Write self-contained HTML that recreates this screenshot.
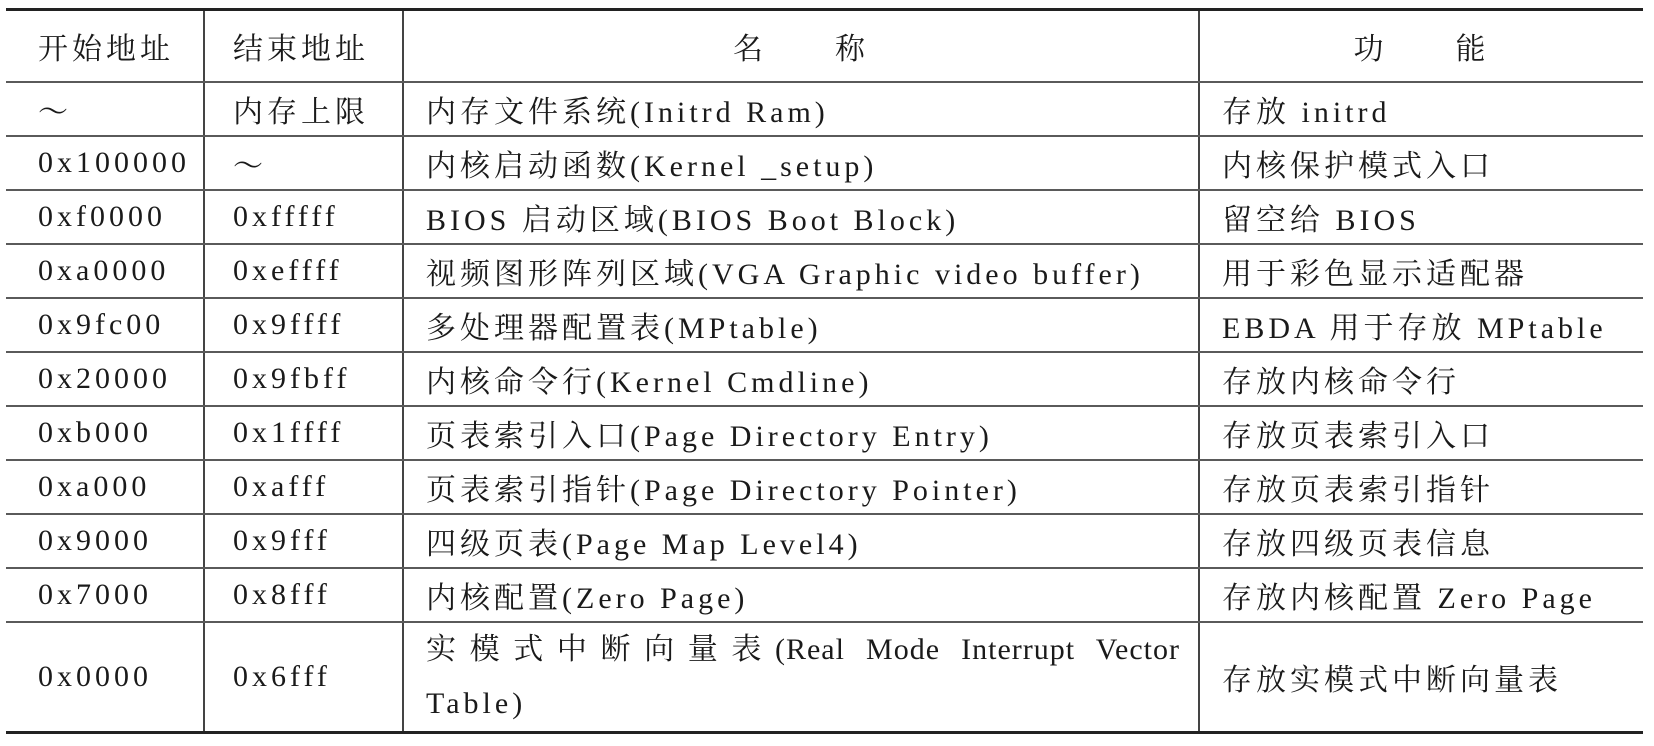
<!DOCTYPE html>
<html><head><meta charset="utf-8"><style>
html,body{margin:0;padding:0;background:#fff;width:1654px;height:746px;overflow:hidden}
table{position:absolute;left:6px;top:8px;width:1637px;border-collapse:collapse;table-layout:fixed;
font-family:"Liberation Serif","Noto Serif CJK SC",serif;font-size:30px;letter-spacing:4px;color:#1a1a1a}
td{border-bottom:2px solid #5a5a5a;border-left:2px solid #444;height:52px;padding:0;vertical-align:middle;white-space:nowrap}
td:first-child{border-left:none;padding-left:32px}
td:nth-child(2){padding-left:28px}
td:nth-child(3),td:nth-child(4){padding-left:22px}
tr:first-child td{border-top:3px solid #222;height:70px}
tr:last-child td{border-bottom:3px solid #222;height:107px}
.c{text-align:center;padding-left:0!important}
.j{display:block;text-align:justify;text-align-last:justify;padding-right:18px;letter-spacing:1px}
</style></head><body>
<table>
<colgroup><col style="width:198px"><col style="width:199px"><col style="width:796px"><col></colgroup>
<tr><td>开始地址</td><td>结束地址</td><td class="c">名&emsp;&emsp;称</td><td class="c">功&emsp;&emsp;能</td></tr>
<tr><td>～</td><td>内存上限</td><td>内存文件系统(Initrd Ram)</td><td>存放 initrd</td></tr>
<tr><td>0x100000</td><td>～</td><td>内核启动函数(Kernel _setup)</td><td>内核保护模式入口</td></tr>
<tr><td>0xf0000</td><td>0xfffff</td><td>BIOS 启动区域(BIOS Boot Block)</td><td>留空给 BIOS</td></tr>
<tr><td>0xa0000</td><td>0xeffff</td><td>视频图形阵列区域(VGA Graphic video buffer)</td><td>用于彩色显示适配器</td></tr>
<tr><td>0x9fc00</td><td>0x9ffff</td><td>多处理器配置表(MPtable)</td><td>EBDA 用于存放 MPtable</td></tr>
<tr><td>0x20000</td><td>0x9fbff</td><td>内核命令行(Kernel Cmdline)</td><td>存放内核命令行</td></tr>
<tr><td>0xb000</td><td>0x1ffff</td><td>页表索引入口(Page Directory Entry)</td><td>存放页表索引入口</td></tr>
<tr><td>0xa000</td><td>0xafff</td><td>页表索引指针(Page Directory Pointer)</td><td>存放页表索引指针</td></tr>
<tr><td>0x9000</td><td>0x9fff</td><td>四级页表(Page Map Level4)</td><td>存放四级页表信息</td></tr>
<tr><td>0x7000</td><td>0x8fff</td><td>内核配置(Zero Page)</td><td>存放内核配置 Zero Page</td></tr>
<tr><td>0x0000</td><td>0x6fff</td><td style="line-height:54px"><span class="j">实模式中断向量表(Real Mode Interrupt Vector</span>Table)</td><td>存放实模式中断向量表</td></tr>
</table>
</body></html>
